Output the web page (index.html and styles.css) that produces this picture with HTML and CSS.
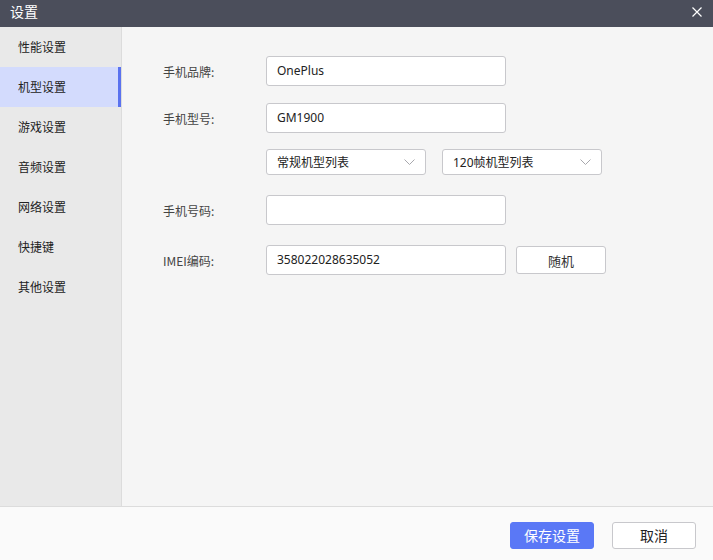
FILE: index.html
```html
<!DOCTYPE html>
<html lang="zh-CN">
<head>
    <meta charset="UTF-8">
    <title>设置</title>
    <link rel="stylesheet" href="styles.css">
</head>
<body>
    <div class="dialog">
        <div class="titlebar">
            <span class="title">设置</span>
            <span class="close">
                <svg width="10" height="10" viewBox="0 0 10 10"><path d="M0.5 0.5L9.5 9.5M9.5 0.5L0.5 9.5" stroke="#fff" stroke-width="1.2"/></svg>
            </span>
        </div>

        <div class="main">
            <ul class="sidebar">
                <li>性能设置</li>
                <li class="active">机型设置</li>
                <li>游戏设置</li>
                <li>音频设置</li>
                <li>网络设置</li>
                <li>快捷键</li>
                <li>其他设置</li>
            </ul>

            <div class="content">
                <div class="row row-brand">
                    <label>手机品牌:</label>
                    <div class="input">OnePlus</div>
                </div>
                <div class="row row-model">
                    <label>手机型号:</label>
                    <div class="input">GM1900</div>
                </div>
                <div class="row row-select">
                    <label></label>
                    <div class="select">常规机型列表<svg class="arrow" width="11" height="6" viewBox="0 0 11 6"><path d="M0.5 0.5L5.5 5.5L10.5 0.5" fill="none" stroke="#a8a8ad" stroke-width="1"/></svg></div>
                    <div class="select">120帧机型列表<svg class="arrow" width="11" height="6" viewBox="0 0 11 6"><path d="M0.5 0.5L5.5 5.5L10.5 0.5" fill="none" stroke="#a8a8ad" stroke-width="1"/></svg></div>
                </div>
                <div class="row row-phone">
                    <label>手机号码:</label>
                    <div class="input"></div>
                </div>
                <div class="row row-imei">
                    <label>IMEI编码:</label>
                    <div class="input">358022028635052</div>
                    <button class="btn-random">随机</button>
                </div>
            </div>
        </div>

        <div class="footer">
            <button class="btn btn-primary">保存设置</button>
            <button class="btn">取消</button>
        </div>
    </div>
</body>
</html>
```

FILE: styles.css
```css
body {
    margin: 0;
    padding: 0;
    font-family: "Segoe UI", "Noto Sans", "Noto Sans CJK SC", sans-serif;
    color: #333;
}

.dialog {
    width: 713px;
    height: 560px;
    display: flex;
    flex-direction: column;
    background-color: #f5f5f5;
}

.titlebar {
    height: 27px;
    background-color: #4b4e5b;
    display: flex;
    align-items: center;
    justify-content: space-between;
    padding: 0 11px 0 10px;
}

.title {
    color: #fff;
    font-size: 14px;
    line-height: 1;
    margin-top: -3px;
}

.close {
    display: flex;
    margin-top: -3px;
}

.main {
    flex: 1;
    display: flex;
}

.sidebar {
    list-style: none;
    margin: 0;
    padding: 0;
    width: 121px;
    background-color: #e9e9e9;
    border-right: 1px solid #dcdcdc;
}

.sidebar li {
    height: 40px;
    line-height: 40px;
    padding-left: 18px;
    font-size: 12px;
    color: #222;
    font-family: "Noto Sans CJK SC", sans-serif;
}

.sidebar li.active {
    background-color: #d3dbfd;
    box-shadow: inset -3px 0 0 #5a72ef;
}

.content {
    flex: 1;
    padding: 29px 0 0 41px;
}

.row {
    display: flex;
    align-items: center;
}

.row label {
    width: 103px;
    font-size: 12px;
    color: #444;
    font-family: "Noto Sans CJK SC", sans-serif;
}

.row-model { margin-top: 17px; }
.row-select { margin-top: 16px; }
.row-phone { margin-top: 20px; }
.row-imei { margin-top: 20px; }

.input {
    box-sizing: border-box;
    width: 240px;
    height: 30px;
    line-height: 28px;
    padding: 0 10px;
    background-color: #fff;
    border: 1px solid #c8c8cc;
    border-radius: 3px;
    font-size: 12px;
    color: #222;
}

.select {
    box-sizing: border-box;
    width: 160px;
    height: 26px;
    padding: 0 10px;
    margin-right: 16px;
    background-color: #fff;
    border: 1px solid #c8c8cc;
    border-radius: 3px;
    font-size: 12px;
    color: #222;
    display: flex;
    align-items: center;
    justify-content: space-between;
}

.btn-random {
    box-sizing: border-box;
    width: 90px;
    height: 28px;
    margin-left: 10px;
    background-color: #fff;
    border: 1px solid #c8c8cc;
    border-radius: 3px;
    font-size: 13px;
    color: #333;
    font-family: "Noto Sans CJK SC", sans-serif;
}

.footer {
    height: 53px;
    border-top: 1px solid #dcdcdc;
    background-color: #fafafa;
    display: flex;
    align-items: center;
    justify-content: flex-end;
    padding-right: 17px;
    gap: 18px;
}

.btn {
    box-sizing: border-box;
    width: 84px;
    height: 27px;
    margin-top: 3px;
    background-color: #fff;
    border: 1px solid #c8c8cc;
    border-radius: 3px;
    font-size: 14px;
    color: #222;
    font-family: "Noto Sans CJK SC", sans-serif;
}

.btn-primary {
    background-color: #5a78f6;
    border-color: #5a78f6;
    color: #fff;
}
```
